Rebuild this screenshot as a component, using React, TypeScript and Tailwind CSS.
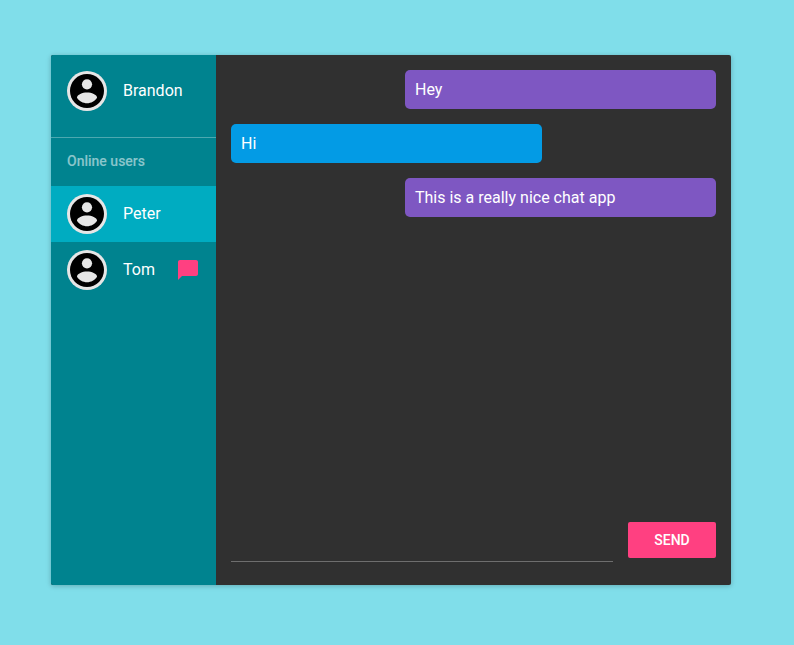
import React from "react";

function Avatar() {
  return (
    <div className="h-10 w-10 shrink-0">
      <svg viewBox="0 0 40 40" className="block h-10 w-10">
        <circle cx="20" cy="20" r="20" fill="#e6e6e6" />
        <circle cx="20" cy="20" r="17" fill="#000" />
        <circle cx="20" cy="13.3" r="5.1" fill="#e6e6e6" />
        <path d="M20 21.5c-4.500 0-10 2-10 5.200 2 3.400 6 5.500 10 5.500s8-2.100 10-5.500c0-3.200-5.500-5.200-10-5.200z" fill="#e6e6e6" />
      </svg>
    </div>
  );
}

function User({ name, active = false, unread = false }: { name: string; active?: boolean; unread?: boolean }) {
  return (
    <div className={`flex h-14 items-center px-4 ${active ? "bg-[#00acc1]" : ""}`}>
      <Avatar />
      <span className="ml-4 flex-1 text-base leading-6">{name}</span>
      {unread && (
        <svg viewBox="0 0 24 24" className="h-6 w-6" fill="#ff4081">
          <path d="M20 2H4c-1.100 0-2 .9-2 2v18l4-4h14c1.100 0 2-.9 2-2V4c0-1.100-.9-2-2-2z" />
        </svg>
      )}
    </div>
  );
}

function Message({ text, mine = false }: { text: string; mine?: boolean }) {
  return (
    <div className={`h-[39px] w-[311px] rounded-[5px] px-2.5 text-base leading-[39px] ${mine ? "self-end bg-[#7e57c2]" : "self-start bg-[#039be5]"}`}>
      {text}
    </div>
  );
}

export default function App() {
  return (
    <div className="h-[645px] w-full bg-[#80deea] pt-[55px] pl-[51px] font-['Roboto',sans-serif] text-white">
      <div className="flex h-[530px] w-[680px] overflow-hidden rounded-[2px] bg-[#303030] shadow-[0_1px_6px_rgba(0,0,0,0.12),0_1px_4px_rgba(0,0,0,0.12)]">
        <aside className="w-[165px] bg-[#00838f]">
          <div className="h-[83px] border-b border-white/30 pt-2">
            <User name="Brandon" />
          </div>
          <h2 className="h-12 px-4 text-sm leading-[46px] font-medium text-white/54">Online users</h2>
          <User name="Peter" active />
          <User name="Tom" unread />
        </aside>
        <main className="flex flex-1 flex-col p-[15px]">
          <div className="flex flex-1 flex-col gap-[15px]">
            <Message text="Hey" mine />
            <Message text="Hi" />
            <Message text="This is a really nice chat app" mine />
          </div>
          <div className="flex h-[63px] gap-[15px]">
            <input className="mb-2 flex-1 border-b border-white/30 bg-transparent outline-none" />
            <button className="mt-[15px] h-9 w-[88px] rounded-[2px] bg-[#ff4081] text-sm font-medium">SEND</button>
          </div>
        </main>
      </div>
    </div>
  );
}
